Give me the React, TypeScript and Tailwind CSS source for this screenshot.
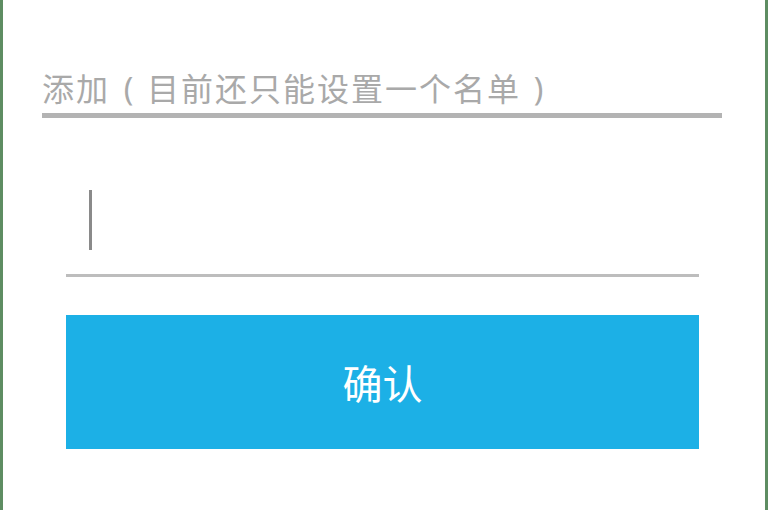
import React from "react";

export default function App() {
  return (
    <div
      className="w-[768px] h-[510px] bg-white border-l-[3px] border-r-[3px] border-[#5e8d62] flex flex-col overflow-hidden"
      style={{ fontFamily: '"Noto Sans CJK SC", "Noto Sans", sans-serif' }}
    >
      <div className="pt-[68px] pl-[39px] pr-[43px]">
        <div className="text-[32px] leading-[38px] text-[#a9a9a9] tracking-[2px] whitespace-nowrap">
          添加
          <span className="inline-block w-[37px] text-center tracking-normal" style={{ fontFamily: '"Noto Sans", sans-serif' }}>(</span>
          目前还只能设置一个名单
          <span className="inline-block w-[35px] text-center tracking-normal" style={{ fontFamily: '"Noto Sans", sans-serif' }}>)</span>
        </div>
        <div className="h-[5px] bg-[#b3b3b3] mt-[5px]" />
      </div>
      <div className="ml-[63px] w-[633px] flex flex-col">
        <div className="h-[156px] flex items-end pb-[24px] pl-[23px]">
          <div className="w-[3px] h-[60px] bg-[#8a8a8a]" />
        </div>
        <div className="h-[3px] bg-[#bdbdbd]" />
        <button className="mt-[38px] h-[134px] w-full bg-[#1cb0e6] text-white text-[40px] leading-none flex items-center justify-center">
          确认
        </button>
      </div>
    </div>
  );
}
